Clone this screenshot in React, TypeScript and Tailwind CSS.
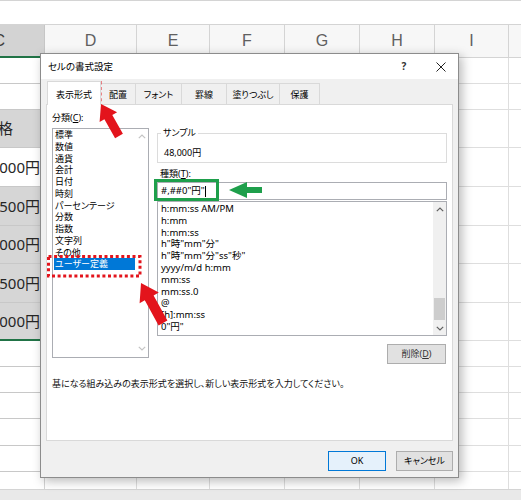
import React from 'react';

type Pt = [number, number];

function arrowPoints(tip: Pt, tail: Pt, headLen: number, headHalf: number, shaftHalf: number): string {
  const [tx, ty] = tip;
  const [ex, ey] = tail;
  const dx = ex - tx;
  const dy = ey - ty;
  const len = Math.hypot(dx, dy);
  const ux = dx / len;
  const uy = dy / len;
  const nx = -uy;
  const ny = ux;
  const bx = tx + ux * headLen;
  const by = ty + uy * headLen;
  const pts: Pt[] = [
    [tx, ty],
    [bx + nx * headHalf, by + ny * headHalf],
    [bx + nx * shaftHalf, by + ny * shaftHalf],
    [ex + nx * shaftHalf, ey + ny * shaftHalf],
    [ex - nx * shaftHalf, ey - ny * shaftHalf],
    [bx - nx * shaftHalf, by - ny * shaftHalf],
    [bx - nx * headHalf, by - ny * headHalf],
  ];
  return pts.map((p) => `${p[0].toFixed(1)},${p[1].toFixed(1)}`).join(' ');
}

const rowHeights = [26, 26, 38, 39, 39, 38, 39, 38, 26, 26, 26, 27, 26, 26];

const cellsC: Record<number, { text: string; gray: boolean; pr: string; last?: boolean }> = {
  2: { text: '価格', gray: true, pr: 'pr-[31px]' },
  3: { text: '48,000円', gray: false, pr: 'pr-[4px]' },
  4: { text: '52,500円', gray: true, pr: 'pr-[4px]' },
  5: { text: '36,000円', gray: true, pr: 'pr-[4px]' },
  6: { text: '27,500円', gray: true, pr: 'pr-[4px]' },
  7: { text: '60,000円', gray: true, pr: 'pr-[4px]', last: true },
};

const categories = ['標準', '数値', '通貨', '会計', '日付', '時刻', 'パーセンテージ', '分数', '指数', '文字列', 'その他', 'ユーザー定義'];

const formats = [
  'h:mm:ss AM/PM',
  'h:mm',
  'h:mm:ss',
  'h"時"mm"分"',
  'h"時"mm"分"ss"秒"',
  'yyyy/m/d h:mm',
  'mm:ss',
  'mm:ss.0',
  '@',
  '[h]:mm:ss',
  '0"円"',
];

function ChevronUp({ color }: { color: string }) {
  return (
    <svg width="8" height="5" viewBox="0 0 8 5">
      <polyline points="0.8,4.2 4,1 7.2,4.2" fill="none" stroke={color} strokeWidth="1.2" />
    </svg>
  );
}
function ChevronDown({ color }: { color: string }) {
  return (
    <svg width="8" height="5" viewBox="0 0 8 5">
      <polyline points="0.8,0.8 4,4 7.2,0.8" fill="none" stroke={color} strokeWidth="1.2" />
    </svg>
  );
}

function Sheet() {
  return (
    <div className="flex flex-col h-[500px] w-[521px] overflow-hidden bg-white font-['Noto_Sans','Noto_Sans_CJK_JP',sans-serif]">
      <div className="h-[25px] shrink-0 border-t border-b border-[#d4d4d4] bg-white" />
      <div className="flex h-[33px] shrink-0 bg-[#f7f7f7] text-[16px] text-[#606060] font-['Liberation_Sans',sans-serif]">
        <div className="w-[45px] shrink-0 flex items-center justify-end bg-[#d3d3d3] border-r border-[#c6c6c6] border-b-2 border-b-[#217346] text-[#3c3c3c] pr-[39px] whitespace-nowrap">C</div>
        <div className="w-[92px] shrink-0 flex items-center justify-center border-r border-b border-[#d4d4d4]">D</div>
        <div className="w-[73px] shrink-0 flex items-center justify-center border-r border-b border-[#d4d4d4]">E</div>
        <div className="w-[75px] shrink-0 flex items-center justify-center border-r border-b border-[#d4d4d4]">F</div>
        <div className="w-[75px] shrink-0 flex items-center justify-center border-r border-b border-[#d4d4d4]">G</div>
        <div className="w-[75px] shrink-0 flex items-center justify-center border-r border-b border-[#d4d4d4]">H</div>
        <div className="w-[74px] shrink-0 flex items-center justify-center border-r border-b border-[#d4d4d4]">I</div>
        <div className="flex-1 border-b border-[#d4d4d4]" />
      </div>
      <div className="flex-1 overflow-hidden">
        {rowHeights.map((h, i) => {
          const c = cellsC[i];
          return (
            <div key={i} className="flex" style={{ height: h }}>
              <div
                className={`w-[45px] shrink-0 flex items-center justify-end whitespace-nowrap text-[15px] text-[#262626] border-r border-[#d4d4d4] ${
                  c ? (c.gray ? 'bg-[#d6d6d6]' : 'bg-white') : ''
                } ${c && c.last ? 'border-b-2 border-b-[#217346]' : 'border-b border-b-[#c8c8c8]'} ${c ? c.pr : ''}`}
              >
                {c ? c.text : ''}
              </div>
              <div className="w-[92px] shrink-0 border-r border-b border-[#dedede]" />
              <div className="w-[73px] shrink-0 border-r border-b border-[#dedede]" />
              <div className="w-[75px] shrink-0 border-r border-b border-[#dedede]" />
              <div className="w-[75px] shrink-0 border-r border-b border-[#dedede]" />
              <div className="w-[75px] shrink-0 border-r border-b border-[#dedede]" />
              <div className="w-[74px] shrink-0 border-r border-b border-[#dedede]" />
              <div className="flex-1 border-b border-[#dedede]" />
            </div>
          );
        })}
      </div>
      <div className="h-[11px] shrink-0 bg-[#e9e9e9] border-t border-[#d4d4d4]" />
    </div>
  );
}

function Tab({ label, w, selected, first }: { label: string; w: string; selected?: boolean; first?: boolean }) {
  if (selected) {
    return (
      <div className={`${w} h-[24px] -mb-[1px] relative z-10 bg-white border border-b-0 border-[#d9d9d9] flex items-center justify-center pt-[2px]`}>
        {label}
      </div>
    );
  }
  return (
    <div className={`${w} h-[21px] bg-[#f0f0f0] border-t border-r border-[#d9d9d9] ${first ? 'border-l' : ''} flex items-center justify-center pt-[1px]`}>
      {label}
    </div>
  );
}

function Dialog() {
  return (
    <div className="absolute left-[40px] top-[53px] w-[419px] h-[425px] border border-[#8c8c8c] bg-[#f0f0f0] flex flex-col shadow-[3px_3px_10px_rgba(0,0,0,0.28)] text-[9px] text-black font-['Noto_Sans','Noto_Sans_CJK_JP',sans-serif] [font-feature-settings:'palt']">
      <div className="h-[25px] shrink-0 bg-white flex items-center pl-[7px] pr-[10px]">
        <span className="leading-[12px] pt-[1px] text-[9.5px]">セルの書式設定</span>
        <div className="ml-auto flex items-center gap-[23px]">
          <span className="w-[14px] text-center text-[10px] font-bold text-[#333]">?</span>
          <svg width="14" height="14" viewBox="0 0 14 14">
            <path d="M2.5 2.5 L11.5 11.5 M11.5 2.5 L2.5 11.5" stroke="#222" strokeWidth="1" />
          </svg>
        </div>
      </div>
      <div className="flex-1 flex flex-col px-[5px] pt-[2px]">
        <div className="flex items-end h-[23px] pl-[1px]">
          <Tab label="表示形式" w="w-[54px]" selected />
          <Tab label="配置" w="w-[35px]" />
          <Tab label="フォント" w="w-[46px]" />
          <Tab label="罫線" w="w-[45px]" />
          <Tab label="塗りつぶし" w="w-[53px]" />
          <Tab label="保護" w="w-[40px]" />
        </div>
        <div className="h-[337px] shrink-0 bg-white border border-[#d9d9d9] flex flex-col pl-[5px] pt-[7px]">
          <div className="flex">
            <div className="w-[97px] shrink-0 flex flex-col">
              <div className="leading-[12px] h-[12px]">
                分類(<span className="underline">C</span>):
              </div>
              <div className="mt-[4px] h-[230px] border border-[#abadb3] flex bg-white">
                <div className="w-[82px] pl-[1px] flex flex-col">
                  {categories.map((c) => (
                    <div
                      key={c}
                      className={`leading-[11.75px] h-[11.75px] pl-[1px] whitespace-nowrap ${c === 'ユーザー定義' ? 'bg-[#0078d7] text-white' : ''}`}
                    >
                      {c}
                    </div>
                  ))}
                </div>
                <div className="flex-1 flex flex-col items-center justify-between pt-[5px] pb-[6px]">
                  <ChevronUp color="#c4c4c4" />
                  <ChevronDown color="#c4c4c4" />
                </div>
              </div>
            </div>
            <div className="ml-[8px] w-[290px] shrink-0 flex flex-col pt-[21px]">
              <div className="relative h-[30px] border border-[#dcdcdc]">
                <span className="absolute -top-[7px] left-[3px] bg-white px-[2px] leading-[12px]">サンプル</span>
                <div className="pl-[6px] pt-[13px] leading-[12px]">48,000円</div>
              </div>
              <div className="mt-[5px] leading-[12px] h-[12px] pl-[3px]">
                種類(<span className="underline">T</span>):
              </div>
              <div className="mt-[2px] h-[18px] border border-[#abadb3] flex items-center pl-[3px] text-[9.5px]">
                <span className="leading-[14px]">#,##0"円"</span>
                <span className="w-[1px] h-[11px] bg-black" />
              </div>
              <div className="mt-[1px] h-[135px] border border-[#abadb3] flex text-[9.5px]">
                <div className="flex-1 pl-[3px] pt-[1px] flex flex-col">
                  {formats.map((f) => (
                    <div key={f} className="leading-[11.8px] h-[11.8px] whitespace-nowrap">
                      {f}
                    </div>
                  ))}
                </div>
                <div className="w-[13px] bg-[#f0f0f0] flex flex-col">
                  <div className="h-[14px] flex items-center justify-center">
                    <ChevronUp color="#606060" />
                  </div>
                  <div className="flex-1 flex flex-col justify-end">
                    <div className="h-[22px] mx-[1px] bg-[#cdcdcd] mb-[1px]" />
                  </div>
                  <div className="h-[14px] flex items-center justify-center">
                    <ChevronDown color="#606060" />
                  </div>
                </div>
              </div>
              <div className="mt-[8px] self-end mr-[1px] w-[59px] h-[20px] bg-[#e1e1e1] border border-[#adadad] flex items-center justify-center text-[#333]">
                削除(<span className="underline">D</span>)
              </div>
            </div>
          </div>
          <div className="mt-[14px] leading-[12px] whitespace-nowrap text-[#111]">
            基になる組み込みの表示形式を選択し、新しい表示形式を入力してください。
          </div>
        </div>
        <div className="mt-[10px] flex justify-end gap-[10px]">
          <div className="w-[58px] h-[20px] bg-[#e5f1fb] border border-[#0078d7] flex items-center justify-center">OK</div>
          <div className="w-[57px] h-[20px] bg-[#e1e1e1] border border-[#adadad] flex items-center justify-center">キャンセル</div>
        </div>
      </div>
    </div>
  );
}

function Annotations() {
  return (
    <svg className="absolute left-0 top-0 pointer-events-none" width="521" height="500" viewBox="0 0 521 500">
      <rect x="48.5" y="82.5" width="51.5" height="19.5" fill="none" stroke="#e3141c" strokeWidth="3" strokeDasharray="3 2.6" />
      <rect x="48.5" y="256.5" width="91.5" height="19.5" fill="none" stroke="#e3141c" strokeWidth="3" strokeDasharray="3 2.6" />
      <polygon points={arrowPoints([101, 104], [119, 136], 15, 10, 4.5)} fill="#e3141c" />
      <polygon points={arrowPoints([141, 283], [163, 323], 17, 11, 5)} fill="#e3141c" />
      <rect x="155.5" y="180.5" width="62" height="19" fill="none" stroke="#1e9f4b" strokeWidth="3" />
      <polygon points={arrowPoints([229, 190], [262, 190], 18, 8, 3)} fill="#1e9f4b" />
    </svg>
  );
}

export default function App() {
  return (
    <div className="relative w-[521px] h-[500px] overflow-hidden">
      <Sheet />
      <Dialog />
      <Annotations />
    </div>
  );
}
